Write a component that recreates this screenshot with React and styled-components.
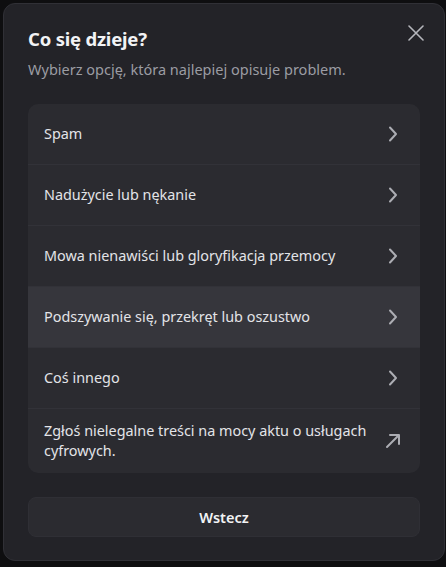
import React from "react";
import styled, { createGlobalStyle } from "styled-components";

const Global = createGlobalStyle`
  html, body { margin: 0; padding: 0; background: #0e0e10; }
  body { font-family: "Noto Sans", "DejaVu Sans", sans-serif; }
`;

const Screen = styled.div`
  width: 446px;
  height: 567px;
  padding: 3px 1px 6px 3px;
  box-sizing: border-box;
  overflow: hidden;
`;

const Modal = styled.div`
  height: 100%;
  box-sizing: border-box;
  background: #232328;
  border: 1px solid #303036;
  border-radius: 12px;
  padding: 18px 24px 0 24px;
  display: flex;
  flex-direction: column;
`;

const Header = styled.div`
  display: flex;
  justify-content: space-between;
  align-items: flex-start;
`;

const Title = styled.h1`
  margin: 4px 0 0;
  font-size: 18.5px;
  font-weight: 700;
  letter-spacing: -0.2px;
  color: #f2f3f5;
  line-height: 26px;
`;

const Close = styled.button`
  background: none;
  border: none;
  padding: 0;
  margin: 3px -4px 0 0;
  width: 16px;
  height: 16px;
  display: flex;
  color: #b5b6bc;
  cursor: pointer;
`;

const Subtitle = styled.p`
  margin: 7px 0 0;
  font-size: 14.5px;
  color: #9b9ca3;
  line-height: 20px;
`;

const List = styled.div`
  margin-top: 25px;
  background: #2b2b30;
  border-radius: 10px;
  overflow: hidden;
`;

const Row = styled.div`
  display: flex;
  align-items: center;
  justify-content: space-between;
  gap: 12px;
  min-height: 60px;
  padding: 0 19px 0 16px;
  background: ${(p) => (p.$active ? "#36363c" : "transparent")};
  border-top: 1px solid #323238;
  &:first-child { border-top: none; }
`;

const Label = styled.span`
  font-size: 14.4px;
  color: #e3e4e8;
  line-height: 20px;
  padding: 12px 0;
`;

const Icon = styled.span`
  flex: none;
  display: flex;
  color: #acadb3;
`;

const Back = styled.button`
  margin-top: 24px;
  height: 40px;
  border: 1px solid #2f2f35;
  border-radius: 8px;
  background: #2b2b30;
  color: #f2f3f5;
  font-family: inherit;
  font-size: 14.5px;
  font-weight: 600;
`;

const Chevron = () => (
  <svg width="16" height="16" viewBox="0 0 16 16" fill="none" stroke="currentColor" strokeWidth="2" strokeLinecap="round" strokeLinejoin="round">
    <path d="M5 1.5L11 8l-6 6.5" />
  </svg>
);

const Arrow = () => (
  <svg width="16" height="16" viewBox="0 0 16 16" fill="none" stroke="currentColor" strokeWidth="2" strokeLinecap="round" strokeLinejoin="round">
    <path d="M2 14L14 2M5 2h9v9" />
  </svg>
);

const items = [
  { label: "Spam" },
  { label: "Nadużycie lub nękanie" },
  { label: "Mowa nienawiści lub gloryfikacja przemocy" },
  { label: "Podszywanie się, przekręt lub oszustwo", active: true },
  { label: "Coś innego" },
  { label: "Zgłoś nielegalne treści na mocy aktu o usługach cyfrowych.", external: true },
];

export default function App() {
  return (
    <Screen>
      <Global />
      <Modal>
        <Header>
          <Title>Co się dzieje?</Title>
          <Close aria-label="Zamknij">
            <svg width="16" height="16" viewBox="0 0 16 16" fill="none" stroke="currentColor" strokeWidth="1.6" strokeLinecap="round">
              <path d="M1 1l14 14M15 1L1 15" />
            </svg>
          </Close>
        </Header>
        <Subtitle>Wybierz opcję, która najlepiej opisuje problem.</Subtitle>
        <List>
          {items.map((it) => (
            <Row key={it.label} $active={it.active}>
              <Label>{it.label}</Label>
              <Icon>{it.external ? <Arrow /> : <Chevron />}</Icon>
            </Row>
          ))}
        </List>
        <Back>Wstecz</Back>
      </Modal>
    </Screen>
  );
}
